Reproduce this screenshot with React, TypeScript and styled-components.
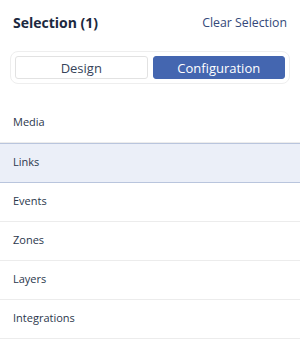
import React, { useState } from "react";
import styled, { createGlobalStyle } from "styled-components";

const Global = createGlobalStyle`
  html, body { margin: 0; padding: 0; background: #fff; }
  body { font-family: "Open Sans", "Noto Sans", sans-serif; -webkit-font-smoothing: antialiased; }
  * { box-sizing: border-box; }
`;

const Panel = styled.div`
  width: 300px;
  height: 348px;
  background: #fff;
  display: flex;
  flex-direction: column;
  overflow: hidden;
`;

const Header = styled.div`
  display: flex;
  align-items: center;
  justify-content: space-between;
  padding: 11px 13px 0 13px;
  height: 33px;
`;

const Title = styled.h2`
  margin: 0;
  font-size: 14px;
  font-weight: 700;
  color: #1c2940;
`;

const ClearLink = styled.button`
  border: none;
  background: none;
  padding: 0;
  font-family: inherit;
  font-size: 12.3px;
  color: #34497a;
  cursor: pointer;
`;

const Segmented = styled.div`
  margin: 18px 10px 0 10px;
  border: 1px solid #eeeeee;
  border-radius: 8px;
  padding: 4px;
  display: grid;
  grid-template-columns: 1fr 1fr;
  gap: 5px;
`;

const Segment = styled.button<{ $active: boolean }>`
  height: 23px;
  border-radius: 3px;
  font-family: inherit;
  font-size: 13px;
  cursor: pointer;
  border: 1px solid ${(p) => (p.$active ? "#4466b0" : "#e2e2e2")};
  background: ${(p) => (p.$active ? "#4466b0" : "#fff")};
  color: ${(p) => (p.$active ? "#fff" : "#36435a")};
  padding: 0;
`;

const List = styled.ul`
  list-style: none;
  margin: 20px 0 0 0;
  padding: 0;
`;

const Row = styled.li<{ $active: boolean }>`
  height: ${(p) => (p.$active ? 40 : 39)}px;
  display: flex;
  align-items: center;
  padding: 0 13px 3px 13px;
  font-size: 11px;
  color: #2b374c;
  background: ${(p) => (p.$active ? "#ebeff8" : "#fff")};
  border-bottom: ${(p) => (p.$active ? "1.5px solid #b9c5dd" : "1px solid #ececec")};
  border-top: ${(p) => (p.$active ? "1px solid #b9c5dd" : "none")};
`;

const items = ["Media", "Links", "Events", "Zones", "Layers", "Integrations"];

export default function App() {
  const [tab, setTab] = useState("Configuration");
  const [sel, setSel] = useState("Links");
  return (
    <>
      <Global />
      <Panel>
        <Header>
          <Title>Selection (1)</Title>
          <ClearLink>Clear Selection</ClearLink>
        </Header>
        <Segmented>
          {["Design", "Configuration"].map((t) => (
            <Segment key={t} $active={tab === t} onClick={() => setTab(t)}>
              {t}
            </Segment>
          ))}
        </Segmented>
        <List>
          {items.map((i) => (
            <Row key={i} $active={sel === i} onClick={() => setSel(i)}>
              {i}
            </Row>
          ))}
        </List>
      </Panel>
    </>
  );
}
